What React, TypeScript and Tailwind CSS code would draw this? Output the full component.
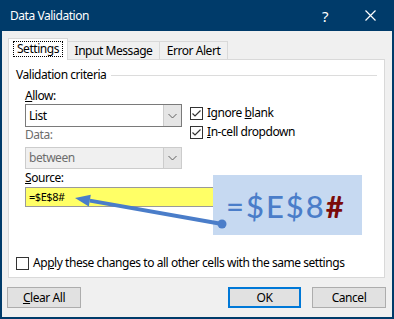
import React from 'react';

const Chevron: React.FC<{ color?: string }> = ({ color = '#606060' }) => (
  <svg width="9" height="6" viewBox="0 0 9 6" fill="none">
    <polyline points="0.5,1 4.5,5 8.5,1" stroke={color} strokeWidth="1" />
  </svg>
);

const Check: React.FC<{ checked?: boolean }> = ({ checked }) => (
  <div className="w-[13px] h-[13px] border border-[#333333] bg-white flex items-center justify-center shrink-0">
    {checked && (
      <svg width="11" height="11" viewBox="0 0 11 11" fill="none">
        <polyline points="1.5,5.5 4,8 9.5,2.5" stroke="#333333" strokeWidth="1.2" />
      </svg>
    )}
  </div>
);

const Combo: React.FC<{ value: string; disabled?: boolean; h: string }> = ({ value, disabled, h }) => (
  <div
    className={`flex w-[157px] ${h} border ${disabled ? 'border-[#cccccc] bg-[#f0f0f0] text-[#6d6d6d]' : 'border-[#7a7a7a] bg-white text-black'}`}
  >
    <div className="flex-1 flex items-center pl-[3px]">{value}</div>
    <div className="w-[18px] flex items-center justify-center bg-[#e5e5e5] border-l border-[#cccccc]">
      <Chevron />
    </div>
  </div>
);

export default function App() {
  return (
    <div className="relative w-[394px] h-[319px] flex flex-col bg-[#003b6a] font-['Noto_Sans',sans-serif] text-[12px] leading-[16px] tracking-[-0.45px] text-black overflow-hidden">
      {/* title bar */}
      <div className="h-[31px] shrink-0 flex items-center pl-[10px] text-white">
        <span>Data Validation</span>
        <span className="ml-auto mr-[37px] text-[15px]">?</span>
        <svg width="11" height="11" viewBox="0 0 11 11" className="mr-[18px]">
          <path d="M0.5 0.5 L10.5 10.5 M10.5 0.5 L0.5 10.5" stroke="white" strokeWidth="1.2" />
        </svg>
      </div>

      {/* body */}
      <div className="flex-1 mx-[2px] mb-[2px] bg-[#f0f0f0] flex flex-col pl-[6px] pr-[7px] pt-[7px]">
        {/* tabs */}
        <div className="flex items-end h-[21px] relative z-10">
          <div className="h-[22px] w-[60px] bg-white border border-b-0 border-[#d9d9d9] flex items-start justify-center pt-[2px] -mb-px">
            <span className="border border-dotted border-black px-[3px] leading-[14px]">Settings</span>
          </div>
          <div className="h-[18px] w-[92px] border-t border-r border-[#d9d9d9] flex items-center justify-center">
            Input Message
          </div>
          <div className="h-[18px] w-[68px] border-t border-r border-[#d9d9d9] flex items-center justify-center">
            Error Alert
          </div>
        </div>

        {/* panel */}
        <div className="h-[219px] bg-white border border-[#d9d9d9] flex flex-col">
          <div className="flex items-center mt-[7px] pl-[7px] pr-[7px] h-[16px]">
            <span>Validation criteria</span>
            <div className="flex-1 h-px bg-[#dcdcdc] ml-[5px]" />
          </div>

          <div className="flex pl-[16px]">
            <div className="flex flex-col w-[157px]">
              <div className="mt-[5px] h-[16px]">
                <span className="underline">A</span>llow:
              </div>
              <Combo value="List" h="h-[23px]" />
              <div className="h-[16px] text-[#6d6d6d]">Data:</div>
              <div className="mt-[4px]">
                <Combo value="between" disabled h="h-[22px]" />
              </div>
              <div className="mt-[1px] h-[16px]">
                <span className="underline">S</span>ource:
              </div>
            </div>
            <div className="flex flex-col ml-[8px] mt-[22px] gap-[3px]">
              <div className="flex items-center h-[16px] gap-[4px]">
                <Check checked />
                <span>
                  Ignore <span className="underline">b</span>lank
                </span>
              </div>
              <div className="flex items-center h-[16px] gap-[4px]">
                <Check checked />
                <span>
                  <span className="underline">I</span>n-cell dropdown
                </span>
              </div>
            </div>
          </div>

          <div className="ml-[16px] mt-[1px] w-[316px] h-[20px] bg-[#ffff66] border border-[#9a9a9a] flex items-center pl-[3px] text-[11px]">
            =$E$8#
          </div>

          <div className="flex items-center mt-[48px] ml-[7px] h-[16px] gap-[4px]">
            <Check />
            <span>
              Ap<span className="underline">p</span>ly these changes to all other cells with the same settings
            </span>
          </div>
        </div>

        {/* buttons */}
        <div className="flex mt-[9px] h-[21px]">
          <button className="w-[74px] h-[21px] ml-[-1px] bg-[#e1e1e1] border border-[#adadad]">
            <span className="underline">C</span>lear All
          </button>
          <button className="w-[73px] h-[21px] ml-auto bg-[#e1e1e1] border-2 border-[#0078d7]">OK</button>
          <button className="w-[74px] h-[21px] ml-[11px] mr-[-1px] bg-[#e1e1e1] border border-[#adadad]">Cancel</button>
        </div>
      </div>

      {/* annotation overlay */}
      <div className="absolute left-[213px] top-[175px] w-[149px] h-[60px] bg-[#c6d9f1] flex items-center pl-[13px] pt-[2px] font-['Lato',sans-serif] text-[31px] leading-none tracking-[2px]">
        <span className="text-[#4a7dc9] font-medium">=$E$8</span>
        <span className="text-[#7b0a0a] font-bold">#</span>
      </div>
      <svg className="absolute left-0 top-0" width="394" height="319" viewBox="0 0 394 319">
        <line x1="222" y1="224" x2="89.8" y2="200.6" stroke="#4a7dc9" strokeWidth="4" />
        <polygon points="75,198 90.8,194.7 88.8,206.5" fill="#4a7dc9" />
        <circle cx="222" cy="224" r="4.5" fill="#4a7dc9" />
      </svg>
    </div>
  );
}
